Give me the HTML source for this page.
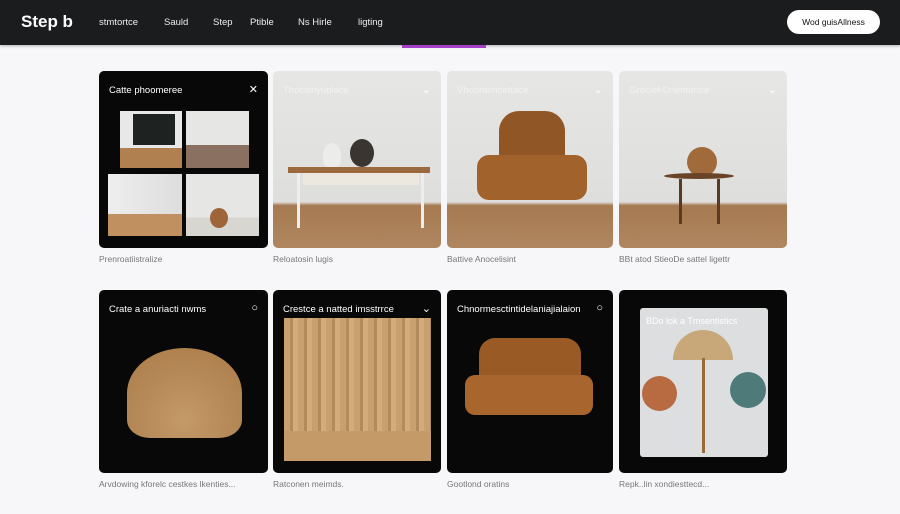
<!DOCTYPE html>
<html><head><meta charset="utf-8"><style>
*{margin:0;padding:0;box-sizing:border-box}
body{width:900px;height:514px;background:#f7f7fa;font-family:"Liberation Sans",sans-serif;position:relative;overflow:hidden}
.hdr{position:absolute;left:0;top:0;width:900px;height:45px;background:#1b1c1e;box-shadow:0 1px 3px rgba(0,0,0,.3)}
.logo{position:absolute;left:21px;top:12px;color:#fff;font-weight:bold;font-size:17px}
.nav{position:absolute;top:17px;color:#eee;font-size:9.5px}
.btn{position:absolute;left:787px;top:10px;width:93px;height:24px;background:#fff;border-radius:12px;font-size:8.5px;color:#111;text-align:center;line-height:24px}
.ul{position:absolute;left:402px;top:45px;width:84px;height:3px;background:#a43dc8}
.card{position:absolute;border-radius:5px;overflow:hidden}
.dark{background:#080808}
.t{position:absolute;left:10px;top:14px;font-size:9.5px;color:#fff}
.ic{position:absolute;right:10px;top:12px;color:#fff;font-size:11px}
.cap{position:absolute;font-size:8.5px;color:#777}
.wall{background:linear-gradient(#e6e6e4 0%,#dededc 74%,#a57a52 76%,#b08660 100%)}
</style></head><body>
<div class="hdr">
<div class="logo">Step b</div>
<div class="nav" style="left:99px">stmtortce</div>
<div class="nav" style="left:164px">Sauld</div>
<div class="nav" style="left:213px">Step</div>
<div class="nav" style="left:250px">Ptible</div>
<div class="nav" style="left:298px">Ns Hirle</div>
<div class="nav" style="left:358px">ligting</div>
<div class="btn">Wod guisAllness</div>
</div>
<div class="ul"></div>

<!-- row 1 -->
<div class="card dark" style="left:99px;top:71px;width:169px;height:177px">
<div class="t">Catte phoomeree</div><div class="ic">✕</div>
<div style="position:absolute;left:21px;top:40px;width:62px;height:57px;background:linear-gradient(#e8e8e8 65%,#b08050 65%)"><div style="position:absolute;left:13px;top:3px;width:42px;height:31px;background:#1e2220"></div></div>
<div style="position:absolute;left:87px;top:40px;width:63px;height:57px;background:linear-gradient(#e6e6e4 60%,#8a7060 60%)"></div>
<div style="position:absolute;left:9px;top:103px;width:74px;height:62px;background:linear-gradient(90deg,#eee,#ddd);"><div style="position:absolute;left:0;bottom:0;width:74px;height:22px;background:#c09060"></div></div>
<div style="position:absolute;left:87px;top:103px;width:73px;height:62px;background:linear-gradient(#e6e6e4 70%,#d8d6d0 70%)"><div style="position:absolute;left:24px;top:34px;width:18px;height:20px;border-radius:50%;background:#a0643a"></div></div>
</div>
<div class="card wall" style="left:273px;top:71px;width:168px;height:177px">
<div class="t" style="color:#f2f2f2">Thocisnyuplace</div><div class="ic">⌄</div>
<div style="position:absolute;left:15px;top:96px;width:142px;height:6px;background:#9a6a3e"></div>
<div style="position:absolute;left:30px;top:102px;width:116px;height:12px;background:#ece8e0"></div>
<div style="position:absolute;left:24px;top:102px;width:3px;height:55px;background:#eee"></div>
<div style="position:absolute;left:148px;top:102px;width:3px;height:55px;background:#eee"></div>
<div style="position:absolute;left:77px;top:68px;width:24px;height:28px;border-radius:50%;background:#3a3530"></div>
<div style="position:absolute;left:50px;top:72px;width:18px;height:24px;border-radius:50% 50% 30% 30%;background:#ececea"></div>
</div>
<div class="card wall" style="left:447px;top:71px;width:166px;height:177px">
<div class="t" style="color:#f2f2f2">Vhoonemcettace</div><div class="ic">⌄</div>
<div style="position:absolute;left:52px;top:40px;width:66px;height:60px;border-radius:20px 20px 6px 6px;background:#915626"></div>
<div style="position:absolute;left:30px;top:84px;width:110px;height:45px;border-radius:12px;background:#a2622c"></div>
</div>
<div class="card wall" style="left:619px;top:71px;width:168px;height:177px">
<div class="t" style="color:#f2f2f2">Groclef-Drientartce</div><div class="ic">⌄</div>
<div style="position:absolute;left:68px;top:76px;width:30px;height:30px;border-radius:50%;background:#a06a3a"></div>
<div style="position:absolute;left:45px;top:102px;width:70px;height:6px;border-radius:50%;background:#6a4428"></div>
<div style="position:absolute;left:60px;top:108px;width:3px;height:45px;background:#5a3a22"></div>
<div style="position:absolute;left:98px;top:108px;width:3px;height:45px;background:#5a3a22"></div>
</div>
<div class="cap" style="left:99px;top:254px">Prenroatiistralize</div>
<div class="cap" style="left:273px;top:254px">Reloatosin lugis</div>
<div class="cap" style="left:447px;top:254px">Battive Anocelisint</div>
<div class="cap" style="left:619px;top:254px">BBt atod StieoDe sattel ligettr</div>

<!-- row 2 -->
<div class="card dark" style="left:99px;top:290px;width:169px;height:183px">
<div class="t">Crate a anuriacti nwms</div><div class="ic">○</div>
<div style="position:absolute;left:28px;top:58px;width:115px;height:90px;border-radius:50% 50% 20% 20%;background:radial-gradient(circle at 50% 80%,#c49a68,#a87a48)"></div>
</div>
<div class="card dark" style="left:273px;top:290px;width:168px;height:183px">
<div class="t">Crestce a natted imsstrrce</div><div class="ic">⌄</div>
<div style="position:absolute;left:11px;top:28px;width:147px;height:143px;background:repeating-linear-gradient(90deg,#c8a070 0 6px,#b48a5a 6px 9px,#d2ac7c 9px 14px)"><div style="position:absolute;left:0;bottom:0;width:100%;height:30px;background:#c49a68"></div></div>
</div>
<div class="card dark" style="left:447px;top:290px;width:166px;height:183px">
<div class="t">Chnormesctintidelaniajialaion</div><div class="ic">○</div>
<div style="position:absolute;left:32px;top:48px;width:102px;height:50px;border-radius:16px 16px 4px 4px;background:#9a5a26"></div>
<div style="position:absolute;left:18px;top:85px;width:128px;height:40px;border-radius:10px;background:#a8662e"></div>
</div>
<div class="card dark" style="left:619px;top:290px;width:168px;height:183px">
<div style="position:absolute;left:21px;top:18px;width:128px;height:149px;background:#dcdedf;border-radius:3px">
<div style="position:absolute;left:6px;top:8px;font-size:9px;color:#fff">BDo lok a Tmsentistics</div>
<div style="position:absolute;left:33px;top:22px;width:60px;height:30px;border-radius:30px 30px 0 0;background:#c8a878"></div>
<div style="position:absolute;left:62px;top:50px;width:3px;height:95px;background:#9a6a3a"></div>
<div style="position:absolute;left:2px;top:68px;width:35px;height:35px;border-radius:50%;background:#b86a40"></div>
<div style="position:absolute;left:90px;top:64px;width:36px;height:36px;border-radius:50%;background:#4e7a7a"></div>
</div>
</div>
<div class="cap" style="left:99px;top:479px">Arvdowing kforelc cestkes lkenties...</div>
<div class="cap" style="left:273px;top:479px">Ratconen meimds.</div>
<div class="cap" style="left:447px;top:479px">Gootlond oratins</div>
<div class="cap" style="left:619px;top:479px">Repk..lin xondiesttecd...</div>
</body></html>
